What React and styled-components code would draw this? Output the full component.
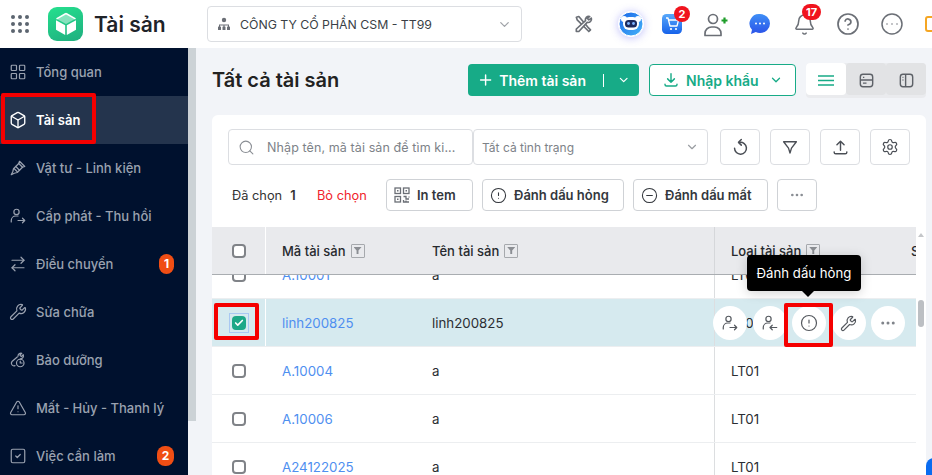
import React from 'react'
import styled, { createGlobalStyle } from 'styled-components'
import {
  Box,
  Wrench,
  LayoutGrid,
  ArrowRightLeft,
  TriangleAlert,
  SquareCheck,
  Bell,
  CircleHelp,
  CircleEllipsis,
  Ellipsis,
  Search,
  ChevronDown,
  Plus,
  Settings,
  CircleAlert,
  CircleMinus,
  Check,
} from 'lucide-react'

const GlobalStyle = createGlobalStyle`
  html, body {
    margin: 0;
    height: 475px;
    overflow: hidden;
    background: #f2f4f8;
    font-family: Inter, "Noto Sans", sans-serif;
    color: #1f2329;
  }
  * { box-sizing: border-box; }
`

const Svg = ({ size = 18, color = 'currentColor', sw = 1.6, children }) => (
  <svg width={size} height={size} viewBox="0 0 24 24" fill="none" stroke={color} strokeWidth={sw} strokeLinecap="round" strokeLinejoin="round">
    {children}
  </svg>
)

const UserOut = (p) => (
  <Svg {...p}>
    <circle cx="10" cy="6.5" r="3.5" />
    <path d="M3 20v-2a6 6 0 0 1 6-6h3" />
    <path d="M12 18h9M18 15l3 3-3 3" />
  </Svg>
)

const UserIn = (p) => (
  <Svg {...p}>
    <circle cx="10" cy="6.5" r="3.5" />
    <path d="M3 20v-2a6 6 0 0 1 6-6h3" />
    <path d="M12 18h9M15 15l-3 3 3 3" />
  </Svg>
)

const Screw = (p) => (
  <Svg {...p}>
    <path d="M14 3l7 7-3 1-5-5z" />
    <path d="M13 6L6 13l-1 4-2 4 4-2 4-1 7-7" />
    <path d="M9 10l5 5M7 13l4 4" />
  </Svg>
)

const Maintain = (p) => (
  <Svg {...p}>
    <path d="M12 7a4 4 0 0 1 5-4l-2.5 2.5 2 2L19 5a4 4 0 0 1-4 5.5" />
    <path d="M11 8l-7 6a3.5 3.5 0 0 0 4 5.5" />
    <circle cx="15" cy="16" r="5" />
    <path d="M15 13.5V16h2.500" />
  </Svg>
)

const LogoCube = () => (
  <svg width="26" height="26" viewBox="0 0 26 26">
    <path d="M13 2.500l9.500 5.300L13 13 3.500 7.800z" fill="#fff" opacity=".45" />
    <path d="M3 9.300l9.200 5V24L3 18.800z" fill="#fff" />
    <path d="M23 9.300l-9.200 5V24L23 18.800z" fill="#fff" />
    <path d="M13 2.500l9.500 5.300M13 2.500L3.500 7.800" stroke="#fff" strokeWidth="1.500" fill="none" />
  </svg>
)

const Tools = () => (
  <svg width="20" height="20" viewBox="0 0 24 24" fill="none" stroke="#6b6f76" strokeWidth="2" strokeLinecap="round" strokeLinejoin="round">
    <path d="M4 4l3-1 11 13 3 3-2 2-3-3L5 7z" />
    <path d="M20 3a4 4 0 0 0-5 5L4 18v3h3l10-11a4 4 0 0 0 5-5l-3 2-2-2z" fill="#fff" />
  </svg>
)

const BotIcon = () => (
  <svg width="26" height="26" viewBox="0 0 26 26">
    <defs>
      <linearGradient id="bot" x1="0" y1="0" x2="1" y2="1">
        <stop offset="0" stopColor="#1a66e8" />
        <stop offset="1" stopColor="#45b4f8" />
      </linearGradient>
    </defs>
    <circle cx="13" cy="13" r="12" fill="url(#bot)" stroke="#fff" strokeWidth="1" />
    <circle cx="6" cy="8" r="3" fill="#fff" />
    <circle cx="20" cy="8" r="3" fill="#fff" />
    <rect x="5" y="6" width="16" height="13" rx="6" fill="#fff" />
    <rect x="7" y="9" width="12" height="7.500" rx="3.500" fill="#1d2a5c" />
    <circle cx="10.500" cy="12.500" r="1.400" fill="#7fb4ff" />
    <circle cx="15.500" cy="12.500" r="1.400" fill="#7fb4ff" />
  </svg>
)

const CartIcon = () => (
  <svg width="22" height="22" viewBox="0 0 22 22">
    <defs>
      <linearGradient id="cart" x1="0" y1="0" x2="0" y2="1">
        <stop offset="0" stopColor="#58a8fa" />
        <stop offset="1" stopColor="#1762ea" />
      </linearGradient>
    </defs>
    <rect x="1" y="1" width="20" height="20" rx="4.500" fill="url(#cart)" />
    <path d="M5 5h2l2 8h7l1.500-6H8" fill="none" stroke="#fff" strokeWidth="1.300" strokeLinejoin="round" />
    <circle cx="10" cy="16" r="1.100" fill="#fff" />
    <circle cx="15" cy="16" r="1.100" fill="#fff" />
  </svg>
)

const AddUser = () => (
  <svg width="26" height="26" viewBox="0 0 26 26" fill="none" stroke="#6b6f76" strokeWidth="1.700">
    <circle cx="11" cy="8" r="4.500" />
    <path d="M3 24.500v-2a6.500 6.500 0 0 1 6.500-6.500h3a6.500 6.500 0 0 1 6.500 6.500v2z" strokeLinejoin="round" />
    <path d="M19.500 9.500h6M22.500 6.500v6" stroke="#1f9d2a" strokeWidth="2.200" />
  </svg>
)

const ChatIcon = () => (
  <svg width="22" height="22" viewBox="0 0 22 22">
    <defs>
      <linearGradient id="chat" x1="0" y1="0" x2="0" y2="1">
        <stop offset="0" stopColor="#3f8ff6" />
        <stop offset="1" stopColor="#2a52e8" />
      </linearGradient>
    </defs>
    <path d="M11 1a10 9.500 0 0 1 0 19c-1.500 0-3-.3-4.200-.9L2 21l1-4.200A9.500 9.500 0 0 1 11 1z" fill="url(#chat)" />
    <circle cx="7" cy="10.500" r="1" fill="#fff" />
    <circle cx="11" cy="10.500" r="1" fill="#fff" />
    <circle cx="15" cy="10.500" r="1" fill="#fff" />
  </svg>
)

const Funnel = ({ size = 18 }) => (
  <Svg size={size} color="#4a4e55" sw={1.800}>
    <path d="M3.500 5h17l-6.500 8.500L12 20l-2-6.500z" />
  </Svg>
)

const Reload = () => (
  <Svg size={19} color="#4a4e55" sw={1.900}>
    <path d="M11 5.500A7.500 7.500 0 1 1 4.500 13" />
    <path d="M13 2L9.500 5.500 13 9" />
  </Svg>
)

const UploadTray = () => (
  <Svg size={19} color="#4a4e55" sw={1.800}>
    <path d="M12 15.500V4M7.500 8.500L12 4l4.500 4.500" />
    <path d="M4 17.500v.500a2 2 0 0 0 2 2h12a2 2 0 0 0 2-2v-.500" />
  </Svg>
)

const DownloadTray = () => (
  <Svg size={18} sw={1.900}>
    <path d="M12 3.500V15M7.500 10.500L12 15l4.500-4.500" />
    <path d="M4 17.500v.500a2 2 0 0 0 2 2h12a2 2 0 0 0 2-2v-.500" />
  </Svg>
)

const Hamburger = () => (
  <svg width="16" height="11" viewBox="0 0 16 11" fill="none" stroke="#17ab87" strokeWidth="1.500">
    <path d="M0 1h16M0 5.500h16M0 10h16" />
  </svg>
)

const QrIcon = () => (
  <svg width="16" height="16" viewBox="0 0 16 16" fill="none" stroke="#6b6f76" strokeWidth="1.300">
    <rect x="1" y="1" width="5.500" height="5.500" />
    <rect x="9.500" y="1" width="5.500" height="5.500" />
    <rect x="1" y="9.500" width="5.500" height="5.500" />
    <rect x="3" y="3" width="1.500" height="1.500" fill="#6b6f76" stroke="none" />
    <rect x="11.500" y="3" width="1.500" height="1.500" fill="#6b6f76" stroke="none" />
    <rect x="3" y="11.500" width="1.500" height="1.500" fill="#6b6f76" stroke="none" />
    <path d="M9.500 9.500h2.500v2.500h3M15 9.500v1M9.500 13v2h5.500M12 13.500v1" />
  </svg>
)

const CardList = () => (
  <svg width="15" height="15" viewBox="0 0 17 17" fill="none" stroke="#5e6268" strokeWidth="1.600">
    <rect x="1.500" y="1.500" width="14" height="14" rx="3" />
    <path d="M1.500 8h14M4.500 5h1.500M4.500 11.500h4" />
  </svg>
)

const SplitView = () => (
  <svg width="15" height="15" viewBox="0 0 17 17" fill="none" stroke="#5e6268" strokeWidth="1.600">
    <rect x="1.500" y="1.500" width="14" height="14" rx="3" />
    <path d="M7.500 1.500v14M4 5h1M4 8h1" />
  </svg>
)

const OrgIcon = () => (
  <svg width="14" height="14" viewBox="0 0 14 14" fill="#6b6f76">
    <circle cx="7" cy="3" r="2.200" />
    <rect x="1" y="9.500" width="3" height="3.500" rx=".6" />
    <rect x="5.500" y="9.500" width="3" height="3.500" rx=".6" />
    <rect x="10" y="9.500" width="3" height="3.500" rx=".6" />
    <path d="M2 10V7.500h10V10h-1V8.500H7.500V10h-1V8.500H3V10z" />
  </svg>
)

const Page = styled.div`
  width: 932px;
  height: 475px;
  display: flex;
  flex-direction: column;
  overflow: hidden;
  position: relative;
`

const Header = styled.header`
  height: 48px;
  flex: none;
  background: #fff;
  display: flex;
  align-items: center;
  overflow: hidden;
`

const DotGrid = styled.div`
  display: grid;
  grid-template-columns: repeat(3, 4px);
  gap: 3px;
  margin-left: 11px;
  & > i {
    width: 4px;
    height: 4px;
    border-radius: 50%;
    background: #5c6570;
  }
`

const Logo = styled.div`
  width: 35px;
  height: 34px;
  flex: none;
  margin-left: 19px;
  border-radius: 9px;
  background: linear-gradient(160deg, #25e08e, #1fae7f);
  display: flex;
  align-items: center;
  justify-content: center;
`

const AppName = styled.div`
  margin-left: 11px;
  width: 113px;
  flex: none;
  font-size: 21px;
  font-weight: 600;
  color: #1f2329;
`

const Company = styled.div`
  width: 315px;
  height: 36px;
  flex: none;
  border: 1px solid #dcdee2;
  border-radius: 4px;
  display: flex;
  align-items: center;
  padding: 0 9px;
  gap: 9px;
  font-size: 12.300px;
  color: #3a3f46;
  & > span { flex: 1; }
`

const HeadIcons = styled.div`
  display: flex;
  align-items: center;
  margin-left: 39px;
`

const HeadIcon = styled.div`
  width: ${(p) => p.$w || 44}px;
  flex: none;
  height: 40px;
  display: flex;
  align-items: center;
  justify-content: center;
  position: relative;
`

const Count = styled.b`
  position: absolute;
  top: ${(p) => p.$top}px;
  left: ${(p) => p.$left}px;
  min-width: 16px;
  height: 16px;
  padding: 0 4px;
  border-radius: 8px;
  background: #f0141e;
  color: #fff;
  font-size: 11px;
  font-weight: 700;
  line-height: 16px;
  text-align: center;
`

const Glow = styled.div`
  border-radius: 50%;
  display: flex;
  box-shadow: 0 1px 8px rgba(70, 70, 240, 0.35);
`

const OrangeEdge = styled.div`
  width: 14px;
  height: 16px;
  margin-left: 6px;
  flex: none;
  border: 2px solid #f5a623;
  border-radius: 3px;
`

const Main = styled.div`
  flex: 1;
  min-height: 0;
  display: flex;
`

const Sidebar = styled.nav`
  width: 188px;
  flex: none;
  background: #00112e;
`

const SideItem = styled.div`
  height: 48px;
  display: flex;
  align-items: center;
  padding: 0 14px 0 9px;
  gap: 9px;
  font-size: 13px;
  font-weight: ${(p) => (p.$active ? 600 : 500)};
  color: ${(p) => (p.$active ? '#fff' : '#9aa2b0')};
  background: ${(p) => (p.$active ? '#24344d' : 'transparent')};
  & > span { flex: 1; }
`

const SideBadge = styled.b`
  width: ${(p) => p.$w}px;
  height: 20px;
  border-radius: 8px;
  background: #f04e14;
  color: #fff;
  font-size: 12px;
  font-weight: 700;
  text-align: center;
  line-height: 20px;
`

const SideScroll = styled.div`
  width: 8px;
  flex: none;
  background: #f2f4f8;
  & > i {
    display: block;
    width: 8px;
    height: 373px;
    background: #ccd2d6;
  }
`

const Content = styled.main`
  flex: 1;
  min-width: 0;
  padding: 16px 6px 0 16px;
`

const TitleRow = styled.div`
  height: 32px;
  display: flex;
  align-items: center;
`

const Title = styled.h1`
  margin: 0;
  width: 256px;
  font-size: 20px;
  font-weight: 600;
  color: #222;
`

const PrimaryButton = styled.div`
  width: 171px;
  height: 32px;
  background: #17ab87;
  border-radius: 4px;
  color: #fff;
  display: flex;
  align-items: center;
  padding: 0 9px;
  gap: 5px;
  font-size: 14px;
  font-weight: 600;
  & > span { width: 103px; white-space: nowrap; }
  & > i {
    width: 1px;
    height: 13px;
    background: #fff;
    margin-right: 8px;
  }
`

const OutlineButton = styled.div`
  width: 147px;
  height: 32px;
  margin-left: 10px;
  background: #fff;
  border: 1px solid #17ab87;
  border-radius: 4px;
  color: #17ab87;
  display: flex;
  align-items: center;
  padding: 0 12px;
  gap: 6px;
  font-size: 14px;
  font-weight: 600;
  & > span { flex: 1; white-space: nowrap; }
`

const Segment = styled.div`
  margin-left: 10px;
  display: flex;
  height: 35px;
  padding-bottom: 3px;
  background: #eaebee;
  border-radius: 4px;
`

const SegItem = styled.div`
  width: 40px;
  padding-top: 3px;
  display: flex;
  align-items: center;
  justify-content: center;
  border-radius: 4px;
  background: ${(p) => (p.$active ? '#fff' : '#e2e3e5')};
`

const Card = styled.section`
  margin-top: 19px;
  height: 400px;
  background: #fff;
  border-radius: 6px;
  padding: 14px 0 0;
`

const FilterRow = styled.div`
  display: flex;
  align-items: center;
  height: 36px;
  padding-left: 16px;
`

const SearchBox = styled.div`
  width: 245px;
  height: 36px;
  flex: none;
  border: 1px solid #dcdee2;
  border-radius: 4px;
  display: flex;
  align-items: center;
  padding: 0 9px;
  gap: 12px;
  font-size: 12.500px;
  color: #7d8288;
  letter-spacing: 0.1px;
`

const StatusSelect = styled.div`
  width: 235px;
  height: 36px;
  flex: none;
  border: 1px solid #dcdee2;
  border-radius: 4px;
  display: flex;
  align-items: center;
  padding: 0 8px;
  font-size: 12px;
  color: #7d8288;
  & > span { flex: 1; }
`

const IconButton = styled.div`
  width: 40px;
  height: 36px;
  flex: none;
  margin-left: ${(p) => p.$ml || 10}px;
  border: 1px solid #dcdee2;
  border-radius: 4px;
  display: flex;
  align-items: center;
  justify-content: center;
  color: #4a4e55;
`

const ActionRow = styled.div`
  display: flex;
  align-items: center;
  height: 32px;
  margin-top: 14px;
  padding-left: 20px;
  font-size: 12.800px;
`

const Selected = styled.span`
  color: #333;
  width: 65px;
  flex: none;
  display: flex;
  gap: 8px;
  white-space: nowrap;
  & > b { font-weight: 600; }
`

const Clear = styled.span`
  color: #f0242c;
  width: 69px;
  flex: none;
  margin-left: 20px;
  white-space: nowrap;
`

const ActionButton = styled.div`
  height: 32px;
  width: ${(p) => p.$w}px;
  flex: none;
  margin-right: 9px;
  padding-left: 7px;
  border: 1px solid #cfd2d6;
  border-radius: 4px;
  display: flex;
  align-items: center;
  gap: 7px;
  font-size: 13px;
  font-weight: 600;
  color: #33373d;
  white-space: nowrap;
`

const MoreButton = styled(ActionButton)`
  padding-left: 0;
  justify-content: center;
`

const TableWrap = styled.div`
  margin-top: 16px;
  position: relative;
  display: flex;
  height: 248px;
`

const Table = styled.div`
  width: 704px;
  flex: none;
  display: flex;
  flex-direction: column;
  overflow: hidden;
`

const Cols = '53px 150px 299px 180px 1fr'

const HeadRow = styled.div`
  display: grid;
  grid-template-columns: ${Cols};
  height: 48px;
  flex: none;
  background: #e9eaed;
  border-bottom: 1px solid #a9adb1;
  position: relative;
  z-index: 1;
`

const HeadCell = styled.div`
  display: flex;
  align-items: center;
  gap: 5px;
  padding-left: 16px;
  border-left: 1px solid ${(p) => p.$edge || 'transparent'};
  font-size: 13px;
  font-weight: 500;
  color: #26292e;
  white-space: nowrap;
  overflow: hidden;
`

const CheckCell = styled.div`
  display: flex;
  align-items: center;
  justify-content: center;
`

const FilterTag = styled.span`
  width: 14px;
  height: 14px;
  flex: none;
  border: 1px solid #a6a9ad;
  border-radius: 1px;
  display: inline-flex;
  align-items: center;
  justify-content: center;
  &::before {
    content: '';
    width: 8px;
    height: 7px;
    background: #8b8e93;
    clip-path: polygon(0 0, 100% 0, 62% 50%, 62% 100%, 38% 100%, 38% 50%);
  }
`

const Rows = styled.div`
  flex: 1;
  min-height: 0;
  overflow: hidden;
`

const RowsInner = styled.div`
  margin-top: -24px;
`

const Row = styled.div`
  display: grid;
  grid-template-columns: ${Cols};
  height: 48px;
  border-bottom: 1px solid #eceef0;
  background: ${(p) => (p.$selected ? '#d6eaef' : '#fff')};
  font-size: 13.300px;
  color: #2b2e33;
`

const Cell = styled.div`
  display: flex;
  align-items: center;
  padding-left: 16px;
  border-left: 1px solid ${(p) => p.$edge || 'transparent'};
  overflow: hidden;
  white-space: nowrap;
`

const LinkCell = styled(Cell)`
  color: #4f8ff0;
`

const CheckBox = styled.span`
  width: 14px;
  height: 14px;
  border: 2px solid #808388;
  border-radius: 4px;
  background: #fff;
`

const CheckedFrame = styled.span`
  width: 20px;
  height: 20px;
  border: 1px solid #a9c8f2;
  display: flex;
  align-items: center;
  justify-content: center;
`

const CheckedBox = styled.span`
  width: 14px;
  height: 14px;
  border-radius: 4px;
  background: #1da888;
  color: #fff;
  display: flex;
  align-items: center;
  justify-content: center;
`

const TableScroll = styled.div`
  width: 10px;
  flex: none;
  background: #fff;
  position: relative;
  &::before {
    content: '';
    position: absolute;
    top: 3px;
    left: 2px;
    border: 3px solid transparent;
    border-bottom: 4px solid #c4c6c9;
  }
  & > i {
    position: absolute;
    top: 73px;
    left: 2px;
    width: 6px;
    height: 27px;
    border-radius: 3px;
    background: #bcbfc3;
  }
`

const RowActions = styled.div`
  position: absolute;
  top: 79px;
  left: 501px;
  display: flex;
  gap: 5.500px;
`

const RoundAction = styled.div`
  width: 34px;
  height: 34px;
  border-radius: 50%;
  background: #fff;
  display: flex;
  align-items: center;
  justify-content: center;
  color: #55595f;
`

const Tooltip = styled.div`
  position: absolute;
  top: 255px;
  left: 747px;
  width: 114px;
  height: 36px;
  background: #000;
  color: #fff;
  border-radius: 4px;
  font-size: 13.200px;
  line-height: 36px;
  text-align: center;
  box-shadow: 0 2px 12px rgba(0, 0, 0, 0.18);
  z-index: 3;
  &::after {
    content: '';
    position: absolute;
    left: 55px;
    top: 36px;
    border: 6px solid transparent;
    border-top-color: #000;
    border-bottom: 0;
  }
`

const RedMark = styled.div`
  position: absolute;
  top: ${(p) => p.$top}px;
  left: ${(p) => p.$left}px;
  width: ${(p) => p.$w}px;
  height: ${(p) => p.$h}px;
  border: 4px solid #f50000;
  border-radius: 2px;
  z-index: 4;
`

const FloatEdge = styled.div`
  position: absolute;
  top: 458px;
  left: 926px;
  width: 30px;
  height: 40px;
  border-radius: 8px;
  background: #0a6cf0;
  z-index: 2;
`

const sideItems = [
  { label: 'Tổng quan', icon: <LayoutGrid size={18} strokeWidth={1.600} /> },
  { label: 'Tài sản', icon: <Box size={18} strokeWidth={1.800} />, active: true },
  { label: 'Vật tư - Linh kiện', icon: <Screw /> },
  { label: 'Cấp phát - Thu hồi', icon: <UserOut /> },
  { label: 'Điều chuyển', icon: <ArrowRightLeft size={18} strokeWidth={1.600} />, badge: 1, badgeWidth: 15 },
  { label: 'Sửa chữa', icon: <Wrench size={18} strokeWidth={1.600} /> },
  { label: 'Bảo dưỡng', icon: <Maintain /> },
  { label: 'Mất - Hủy - Thanh lý', icon: <TriangleAlert size={18} strokeWidth={1.600} /> },
  { label: 'Việc cần làm', icon: <SquareCheck size={18} strokeWidth={1.600} />, badge: 2, badgeWidth: 17 },
]

const rows = [
  { code: 'A.10001', name: 'a', type: 'LT01' },
  { code: 'linh200825', name: 'linh200825', type: 'LT01', selected: true },
  { code: 'A.10004', name: 'a', type: 'LT01' },
  { code: 'A.10006', name: 'a', type: 'LT01' },
  { code: 'A24122025', name: 'a', type: 'LT01' },
]

export default function App() {
  return (
    <Page>
      <GlobalStyle />
      <Header>
        <DotGrid>
          {Array.from({ length: 9 }).map((_, i) => (
            <i key={i} />
          ))}
        </DotGrid>
        <Logo>
          <LogoCube />
        </Logo>
        <AppName>Tài sản</AppName>
        <Company>
          <OrgIcon />
          <span>CÔNG TY CỔ PHẦN CSM - TT99</span>
          <ChevronDown size={15} color="#a0a3a8" />
        </Company>
        <HeadIcons>
          <HeadIcon $w={44}><Tools /></HeadIcon>
          <HeadIcon $w={52}><Glow><BotIcon /></Glow></HeadIcon>
          <HeadIcon $w={30}>
            <CartIcon />
            <Count $top={2} $left={17}>2</Count>
          </HeadIcon>
          <HeadIcon $w={56}><AddUser /></HeadIcon>
          <HeadIcon $w={34}><ChatIcon /></HeadIcon>
          <HeadIcon $w={54}>
            <Bell size={23} color="#6b6f76" strokeWidth={1.600} />
            <Count $top={0} $left={25}>17</Count>
          </HeadIcon>
          <HeadIcon $w={34}><CircleHelp size={24} color="#6b6f76" strokeWidth={1.700} /></HeadIcon>
          <HeadIcon $w={54}><CircleEllipsis size={24} color="#6b6f76" strokeWidth={1.500} /></HeadIcon>
          <OrangeEdge />
        </HeadIcons>
      </Header>
      <Main>
        <Sidebar>
          {sideItems.map((item) => (
            <SideItem key={item.label} $active={item.active}>
              {item.icon}
              <span>{item.label}</span>
              {item.badge && <SideBadge $w={item.badgeWidth}>{item.badge}</SideBadge>}
            </SideItem>
          ))}
        </Sidebar>
        <SideScroll><i /></SideScroll>
        <Content>
          <TitleRow>
            <Title>Tất cả tài sản</Title>
            <PrimaryButton>
              <Plus size={18} strokeWidth={2} />
              <span>Thêm tài sản</span>
              <i />
              <ChevronDown size={14} strokeWidth={2.200} />
            </PrimaryButton>
            <OutlineButton>
              <DownloadTray />
              <span>Nhập khẩu</span>
              <ChevronDown size={14} strokeWidth={2.200} />
            </OutlineButton>
            <Segment>
              <SegItem $active><Hamburger /></SegItem>
              <SegItem><CardList /></SegItem>
              <SegItem><SplitView /></SegItem>
            </Segment>
          </TitleRow>
          <Card>
            <FilterRow>
              <SearchBox>
                <Search size={17} color="#8a8e94" strokeWidth={1.500} />
                <span>Nhập tên, mã tài sản để tìm ki...</span>
              </SearchBox>
              <StatusSelect>
                <span>Tất cả tình trạng</span>
                <ChevronDown size={14} color="#9a9da2" />
              </StatusSelect>
              <IconButton $ml={12}><Reload /></IconButton>
              <IconButton><Funnel /></IconButton>
              <IconButton><UploadTray /></IconButton>
              <IconButton><Settings size={18} strokeWidth={1.600} /></IconButton>
            </FilterRow>
            <ActionRow>
              <Selected>Đã chọn <b>1</b></Selected>
              <Clear>Bỏ chọn</Clear>
              <ActionButton $w={87}><QrIcon />In tem</ActionButton>
              <ActionButton $w={142}><CircleAlert size={17} strokeWidth={1.500} />Đánh dấu hỏng</ActionButton>
              <ActionButton $w={135}><CircleMinus size={17} strokeWidth={1.500} />Đánh dấu mất</ActionButton>
              <MoreButton $w={40}><Ellipsis size={16} color="#8a8e94" /></MoreButton>
            </ActionRow>
            <TableWrap>
              <Table>
                <HeadRow>
                  <CheckCell><CheckBox /></CheckCell>
                  <HeadCell $edge="#fff">Mã tài sản <FilterTag /></HeadCell>
                  <HeadCell>Tên tài sản <FilterTag /></HeadCell>
                  <HeadCell $edge="#d5d7da">Loại tài sản <FilterTag /></HeadCell>
                  <HeadCell>Số serial</HeadCell>
                </HeadRow>
                <Rows>
                  <RowsInner>
                    {rows.map((r) => (
                      <Row key={r.code} $selected={r.selected}>
                        <CheckCell>
                          {r.selected ? (
                            <CheckedFrame>
                              <CheckedBox><Check size={10} strokeWidth={4} /></CheckedBox>
                            </CheckedFrame>
                          ) : (
                            <CheckBox />
                          )}
                        </CheckCell>
                        <LinkCell $edge="#fff">{r.code}</LinkCell>
                        <Cell>{r.name}</Cell>
                        <Cell $edge="#dcdee0">{r.type}</Cell>
                      </Row>
                    ))}
                  </RowsInner>
                </Rows>
              </Table>
              <TableScroll><i /></TableScroll>
              <RowActions>
                <RoundAction><UserOut size={18} /></RoundAction>
                <RoundAction><UserIn size={18} /></RoundAction>
                <RoundAction><CircleAlert size={18} strokeWidth={1.600} /></RoundAction>
                <RoundAction><Wrench size={17} strokeWidth={1.700} /></RoundAction>
                <RoundAction><Ellipsis size={18} color="#80848a" /></RoundAction>
              </RowActions>
            </TableWrap>
          </Card>
        </Content>
      </Main>
      <Tooltip>Đánh dấu hỏng</Tooltip>
      <RedMark $top={93} $left={1} $w={95} $h={51} />
      <RedMark $top={303} $left={214} $w={45} $h={37} />
      <RedMark $top={303} $left={784} $w={49} $h={44} />
      <FloatEdge />
    </Page>
  )
}
